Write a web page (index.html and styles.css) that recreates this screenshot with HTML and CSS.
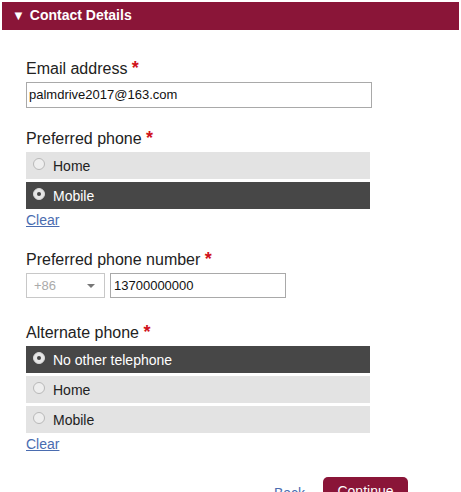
FILE: index.html
```html
<!DOCTYPE html>
<html>
<head>
<meta charset="utf-8">
<link rel="stylesheet" href="styles.css">
</head>
<body>
<div class="page">
  <div class="panel-header"><span class="caret">▼</span> Contact Details</div>
  <div class="panel-body">
    <div class="field field-email">
      <div class="label">Email address <span class="req">*</span></div>
      <div class="text-input wide">palmdrive2017@163.com</div>
    </div>

    <div class="field">
      <div class="label">Preferred phone <span class="req">*</span></div>
      <div class="options">
        <div class="option"><span class="radio"></span>Home</div>
        <div class="option selected"><span class="radio"></span>Mobile</div>
      </div>
      <a class="clear" href="#">Clear</a>
    </div>

    <div class="field field-number">
      <div class="label">Preferred phone number <span class="req">*</span></div>
      <div class="phone-row">
        <div class="select">+86<span class="arrow"></span></div>
        <div class="text-input number">13700000000</div>
      </div>
    </div>

    <div class="field field-alt">
      <div class="label">Alternate phone <span class="req">*</span></div>
      <div class="options">
        <div class="option selected"><span class="radio"></span>No other telephone</div>
        <div class="option"><span class="radio"></span>Home</div>
        <div class="option"><span class="radio"></span>Mobile</div>
      </div>
      <a class="clear" href="#">Clear</a>
    </div>

    <div class="actions">
      <a class="back" href="#">Back</a>
      <button class="continue">Continue</button>
    </div>
  </div>
</div>
</body>
</html>
```

FILE: styles.css
```css
html, body {
  margin: 0;
  padding: 0;
  background: #fff;
  font-family: "Liberation Sans", Arial, sans-serif;
  color: #222;
}
.page {
  padding: 2px 2px 0 2px;
}
.panel-header {
  height: 28px;
  line-height: 27px;
  background: #8a1538;
  color: #fff;
  font-weight: bold;
  font-size: 14px;
  padding-left: 10px;
}
.caret {
  font-size: 13px;
  display: inline-block;
  margin-right: 1px;
}
.panel-body {
  padding: 30px 24px 0 24px;
}
.field {
  margin-bottom: 22px;
}
.label {
  font-size: 16px;
  line-height: 18px;
  height: 18px;
  color: #222;
  margin-bottom: 4px;
}
.req {
  color: #d0121b;
  font-size: 18px;
  line-height: 16px;
  font-weight: bold;
  vertical-align: top;
}
.text-input {
  box-sizing: border-box;
  height: 26px;
  border: 1px solid #a9a9a9;
  font-size: 13px;
  line-height: 24px;
  padding-left: 2px;
  color: #111;
}
.wide { width: 346px; }
.options {
  width: 344px;
  display: flex;
  flex-direction: column;
  gap: 3px;
}
.option {
  height: 27px;
  background: #e3e3e3;
  display: flex;
  align-items: center;
  font-size: 14px;
  color: #222;
}
.option.selected {
  background: #474747;
  color: #fff;
}
.radio {
  box-sizing: border-box;
  width: 12px;
  height: 12px;
  border-radius: 50%;
  border: 1px solid #b8b8b8;
  background: #eeeeee;
  margin-left: 7px;
  margin-right: 8px;
  margin-top: -3px;
  position: relative;
}
.option.selected .radio {
  border-color: #d8d8d8;
  background: #e6e6e6;
}
.option.selected .radio::after {
  content: "";
  position: absolute;
  left: 3px;
  top: 3px;
  width: 4px;
  height: 4px;
  border-radius: 50%;
  background: #444;
}
.clear {
  display: inline-block;
  font-size: 14px;
  line-height: 16px;
  margin-top: 3px;
  color: #4a6cb0;
  text-decoration: underline;
}
.field-number { margin-bottom: 26px; }
.phone-row {
  display: flex;
  gap: 5px;
}
.select {
  box-sizing: border-box;
  width: 79px;
  height: 25px;
  border: 1px solid #c8c8c8;
  font-size: 13px;
  line-height: 23px;
  padding-left: 7px;
  color: #aaa;
  position: relative;
}
.arrow {
  position: absolute;
  right: 9px;
  top: 10px;
  width: 0;
  height: 0;
  border-left: 4px solid transparent;
  border-right: 4px solid transparent;
  border-top: 4px solid #777;
}
.number {
  width: 176px;
  height: 25px;
  line-height: 23px;
  padding-left: 3px;
}
.field-alt { margin-bottom: 24px; }
.actions {
  display: flex;
  justify-content: flex-end;
  align-items: flex-start;
  width: 382px;
  height: 30px;
}
.back {
  font-size: 14px;
  line-height: 16px;
  color: #4a6cb0;
  text-decoration: none;
  margin-right: 18px;
  margin-top: 8px;
}
.continue {
  background: #8a1538;
  color: #fff;
  border: none;
  border-radius: 5px;
  font-family: "Liberation Sans", Arial, sans-serif;
  font-size: 14px;
  line-height: 16px;
  height: 30px;
  width: 85px;
  padding: 6px 0 0 0;
  display: flex;
  justify-content: center;
  align-items: flex-start;
  margin: 0;
}
```
